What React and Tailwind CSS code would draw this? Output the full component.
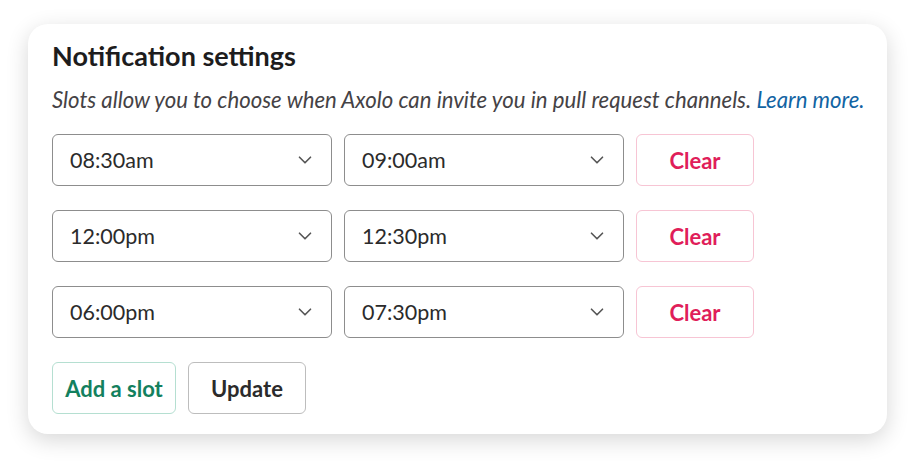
import { ChevronDown } from "lucide-react";

const slots = [
  ["08:30am", "09:00am"],
  ["12:00pm", "12:30pm"],
  ["06:00pm", "07:30pm"],
];

const TimeSelect = ({ value }) => (
  <div className="flex items-center justify-between w-[280px] h-[52px] pl-[17px] pr-[15px] border border-[#8d8d8d] rounded-[6px] bg-white">
    <span className="text-[21.5px] text-[#2b2b2b]">{value}</span>
    <ChevronDown className="w-[22px] h-[22px] text-[#555]" strokeWidth={1.8} />
  </div>
);

export default function App() {
  return (
    <div className="w-[915px] h-[466px] bg-white pt-[24px] pl-[28px]" style={{ fontFamily: "Lato, 'Liberation Sans', sans-serif" }}>
      <div className="w-[859px] h-[410px] bg-white rounded-[20px] shadow-[0_6px_22px_rgba(0,0,0,0.16)] pl-[24px] pt-[16px]">
        <h1 className="text-[27px] font-bold text-[#1d1c1d] leading-[32px]">Notification settings</h1>
        <p className="mt-[14px] text-[22.2px] italic text-[#454245] leading-[28px] whitespace-nowrap">
          Slots allow you to choose when Axolo can invite you in pull request channels.{" "}
          <span className="text-[#1264a3]">Learn more.</span>
        </p>
        <div className="mt-[20px] flex flex-col gap-[24px]">
          {slots.map(([from, to]) => (
            <div key={from} className="flex gap-[12px]">
              <TimeSelect value={from} />
              <TimeSelect value={to} />
              <button className="w-[118px] h-[52px] border border-[#f7c5d4] rounded-[6px] text-[22px] font-bold text-[#e01e5a] bg-white">
                Clear
              </button>
            </div>
          ))}
        </div>
        <div className="mt-[24px] flex gap-[12px]">
          <button className="w-[124px] h-[52px] border border-[#b5dfd1] rounded-[6px] text-[22px] font-bold text-[#13805e] bg-white">
            Add a slot
          </button>
          <button className="w-[118px] h-[52px] border border-[#bdbdbd] rounded-[6px] text-[22px] font-bold text-[#2b2b2b] bg-white">
            Update
          </button>
        </div>
      </div>
    </div>
  );
}
